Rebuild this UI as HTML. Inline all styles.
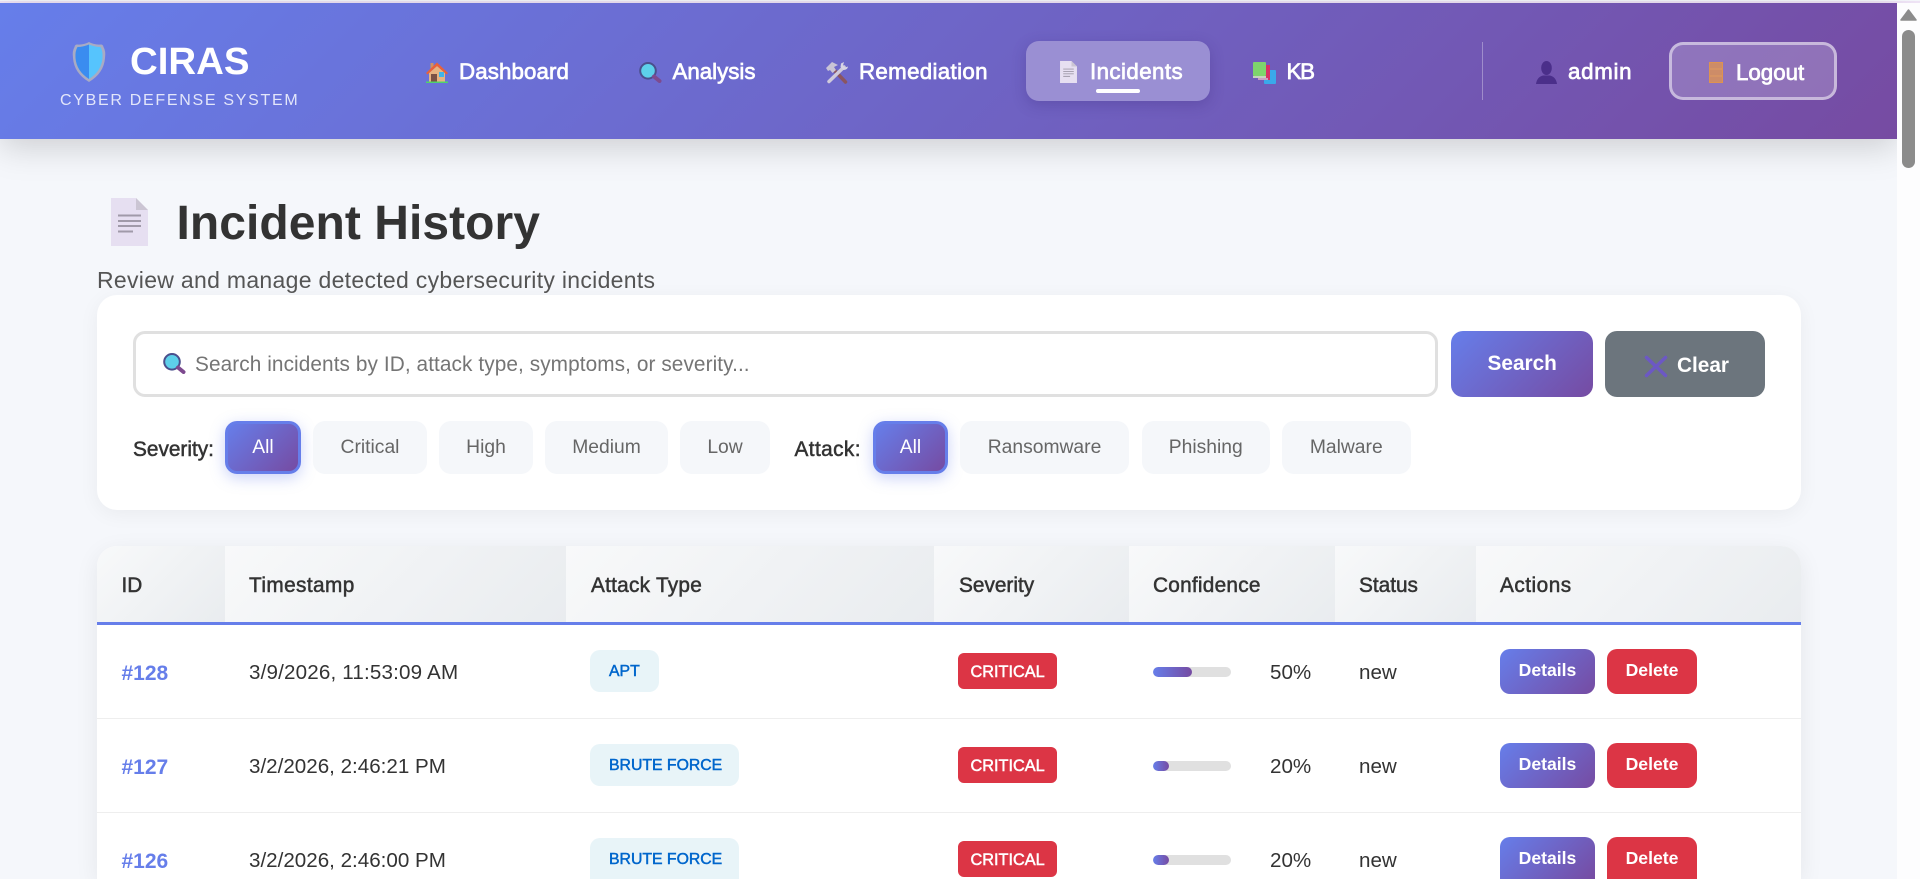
<!DOCTYPE html>
<html lang="en">
<head>
<meta charset="utf-8">
<title>CIRAS - Incident History</title>
<style>
*{box-sizing:border-box;margin:0;padding:0}
html,body{width:1920px;height:879px;overflow:hidden;background:#f5f7fb;font-family:"Liberation Sans",Arial,sans-serif}
#page{position:relative;width:1920px;height:879px;overflow:hidden;background:#f5f7fb}
.a{position:absolute}
.t{position:absolute;white-space:nowrap;line-height:1}
.s{-webkit-text-stroke:.5px currentColor}
.grad{background:linear-gradient(135deg,#667eea,#764ba2)}
svg{position:absolute;display:block;overflow:visible}
#hdr{left:0;top:3px;width:1897px;height:136px;box-shadow:0 8px 32px rgba(0,0,0,.17)}
.nav{font-size:22.3px;color:#fff;top:61px;-webkit-text-stroke:.7px #fff}
.pill{position:absolute;top:421px;height:53px;border-radius:12px;background:#f5f7fa;color:#666;font-size:19.3px;display:flex;align-items:center;justify-content:center}
.pill.on{background:linear-gradient(135deg,#667eea,#764ba2);border:3px solid #667eea;color:#fff;box-shadow:0 4px 15px rgba(102,126,234,.35)}
.th{position:absolute;top:0;height:76px;background:linear-gradient(135deg,#f8f9fa,#e9ecef)}
.hd{font-size:20.8px;color:#333;top:575.7px}
.cell{font-size:20.6px;color:#333}
.id{font-size:21px;font-weight:700;color:#667eea}
.badge{position:absolute;height:42px;background:#e8f4f8;border-radius:10px}
.bt{font-size:15.8px;color:#0066cc}
.crit{position:absolute;left:958px;width:99px;height:36px;background:#dc3545;border-radius:6px}
.ct{font-size:16.3px;color:#fff;left:970.5px}
.bar{position:absolute;left:1153px;width:78px;height:10px;background:#e0e0e0;border-radius:5px;overflow:hidden}
.bar i{display:block;height:100%;border-radius:5px;background:linear-gradient(90deg,#667eea,#764ba2)}
.btn{position:absolute;height:45px;border-radius:10px;color:#fff;font-size:17.6px;font-weight:700;display:flex;align-items:center;justify-content:center;padding-bottom:2px}
.det{left:1500px;width:95px;background:linear-gradient(135deg,#667eea,#764ba2)}
.del{left:1607px;width:90px;background:#dc3545}
.rule{position:absolute;left:97px;width:1704px;height:1px;background:#eee}
</style>
</head>
<body>
<div id="page">
<svg width="0" height="0" style="position:absolute">
<defs>
<symbol id="mag" viewBox="0 0 23 21"><circle cx="9" cy="8.8" r="7.8" fill="#5dd0ea" stroke="#4a4f8c" stroke-width="2"/><path d="M15 14.5L20.5 19" stroke="#7d4a8f" stroke-width="4" stroke-linecap="round"/></symbol>
<symbol id="doc" viewBox="0 0 37 48"><path d="M0 0H25L37 12V48H0Z" fill="#e6dff1"/><path d="M25 0L37 12H25Z" fill="#cbc5d3"/><path d="M7 17.5H30M7 23H30M7 28H30M7 33.5H22" stroke="#a09aa9" stroke-width="2"/></symbol>
</defs>
</svg>

<div class="a" style="left:0;top:1px;width:1920px;height:2px;background:#efe4f6"></div>
<div class="a grad" id="hdr"></div>

<!-- logo -->
<svg style="left:71.5px;top:41px" width="34" height="42" viewBox="0 0 34 42"><path d="M17 1Q22 4 29 3.5Q31 3.5 31.5 6Q34 10 33 17Q32 32 17 41Q2 32 1 17Q0 10 2.5 6Q3 3.5 5 3.5Q12 4 17 1Z" fill="#a8abc4"/><path d="M17 3.5Q11 6 5.5 6Q3 10 3.5 17Q4.5 30 17 38Z" fill="#3a8cf0"/><path d="M17 3.5Q23 6 28.5 6Q31 10 30.5 17Q29.5 30 17 38Z" fill="#56c4fd"/></svg>
<div class="t" style="left:130px;top:42.5px;font-size:38.4px;font-weight:700;color:#fff">CIRAS</div>
<div class="t" style="left:60px;top:93px;font-size:16px;letter-spacing:1.7px;color:#e3e6fa">CYBER DEFENSE SYSTEM</div>

<!-- nav -->
<svg style="left:426px;top:62px" width="22" height="21" viewBox="0 0 22 21"><rect x="4.5" y="1" width="3" height="6" fill="#cf9264"/><path d="M3 11L11 4L19 11V19.5H3Z" fill="#e6b381"/><path d="M11 .5L22 11L20.5 12.5L11 4L1.5 12.5L0 11Z" fill="#e8613a"/><rect x="5" y="12" width="6" height="7.5" fill="#7b5245"/><rect x="13" y="10" width="5" height="5" fill="#3fb4ea"/><rect x="0" y="19.5" width="22" height="1.5" fill="#4fd36b"/></svg>
<div class="t nav" style="left:459px;letter-spacing:.1px">Dashboard</div>
<svg style="left:639px;top:62px" width="23" height="21"><use href="#mag"/></svg>
<div class="t nav" style="left:672.5px">Analysis</div>
<svg style="left:825px;top:62px" width="23" height="22" viewBox="0 0 23 22"><path d="M9 8L20.5 20" stroke="#8a5560" stroke-width="3.5" stroke-linecap="round"/><path d="M4 19.5L19 5" stroke="#cfcadb" stroke-width="3.5" stroke-linecap="round"/><path d="M1 6L7 0L13 3L9 5L11 8L7.5 11L5 8L3 9Z" fill="#c9c4d6"/><path d="M16 1.5L19 0L18 3.5L20 5.5L23 4.5Q22.5 8 18.5 8L15.5 5Z" fill="#d9d4e4"/></svg>
<div class="t nav" style="left:859px;letter-spacing:.33px">Remediation</div>

<div class="a" style="left:1026px;top:41px;width:183.5px;height:60px;border-radius:13px;background:#9a8fd3;box-shadow:0 4px 14px rgba(50,30,110,.25)"></div>
<svg style="left:1060px;top:61px" width="17" height="22"><use href="#doc"/></svg>
<div class="t nav" style="left:1090px;letter-spacing:.42px">Incidents</div>
<div class="a" style="left:1095.5px;top:89px;width:44.5px;height:4px;border-radius:2px;background:#fff"></div>

<svg style="left:1253px;top:62px" width="23" height="22" viewBox="0 0 23 22"><rect x="11" y="8" width="12" height="14" rx="1" fill="#3aa9ea"/><rect x="5" y="3" width="12" height="15" fill="#d92f66"/><rect x="5" y="16" width="10" height="2" fill="#c9a0c0"/><rect x="0" y="0" width="13" height="14" rx="1" fill="#7ed56c"/><rect x="0" y="14" width="13" height="2" fill="#c6d2c0"/></svg>
<div class="t nav" style="left:1286.5px;letter-spacing:-1.2px">KB</div>

<div class="a" style="left:1482px;top:42px;width:1px;height:58px;background:rgba(255,255,255,.32)"></div>
<svg style="left:1536px;top:61px" width="21" height="23" viewBox="0 0 21 23"><ellipse cx="10.5" cy="7" rx="5.3" ry="7" fill="#4b2f8a"/><path d="M0 23Q1 16 7 14.5H14Q20 16 21 23Z" fill="#4b2f8a"/></svg>
<div class="t nav" style="left:1568px;letter-spacing:.7px">admin</div>

<div class="a" style="left:1669px;top:42px;width:168px;height:58px;border:3px solid rgba(255,255,255,.5);border-radius:14px;background:rgba(255,255,255,.2)"></div>
<svg style="left:1709px;top:62px" width="14" height="21" viewBox="0 0 14 21"><rect x=".5" y=".5" width="13" height="20" fill="#cd8c68" stroke="#de9350"/><path d="M1 7H13M1 14H13" stroke="#de9a60" stroke-width="1"/></svg>
<div class="t nav" style="left:1736px;top:62px">Logout</div>

<!-- title -->
<svg style="left:111px;top:198px" width="37" height="48"><use href="#doc"/></svg>
<div class="t" style="left:176.5px;top:199.8px;font-size:48px;font-weight:700;letter-spacing:.05px;color:#333">Incident History</div>
<div class="t" style="left:97px;top:268.5px;font-size:23px;letter-spacing:.3px;color:#555">Review and manage detected cybersecurity incidents</div>

<!-- search card -->
<div class="a" style="left:97px;top:295px;width:1704px;height:215px;background:#fff;border-radius:20px;box-shadow:0 4px 20px rgba(0,0,0,.05)"></div>
<div class="a" style="left:133px;top:331px;width:1305px;height:66px;border:3px solid #e0e0e0;border-radius:12px;background:#fff"></div>
<svg style="left:163px;top:353px" width="23" height="21"><use href="#mag"/></svg>
<div class="t" style="left:195px;top:354.6px;font-size:20.8px;letter-spacing:.08px;color:#757575">Search incidents by ID, attack type, symptoms, or severity...</div>
<div class="a grad" style="left:1451px;top:331px;width:142px;height:66px;border-radius:12px"></div>
<div class="t" style="left:1487.5px;top:354px;font-size:20.8px;font-weight:700;color:#fff">Search</div>
<div class="a" style="left:1605px;top:331px;width:160px;height:66px;border-radius:12px;background:#6c757d"></div>
<svg style="left:1644px;top:356px" width="24" height="21" viewBox="0 0 24 21"><path d="M2.5 1.5L21.5 19.5M21.5 1.5L2.5 19.5" stroke="#6c58c4" stroke-width="3.5" stroke-linecap="round"/></svg>
<div class="t" style="left:1677px;top:356px;font-size:20.8px;font-weight:700;color:#fff">Clear</div>

<div class="t s" style="left:133px;top:439.6px;font-size:20.8px;color:#333">Severity:</div>
<div class="pill on" style="left:225px;width:76px">All</div>
<div class="pill" style="left:313px;width:114px">Critical</div>
<div class="pill" style="left:439px;width:94px">High</div>
<div class="pill" style="left:545px;width:123px">Medium</div>
<div class="pill" style="left:680px;width:90px">Low</div>
<div class="t s" style="left:794.5px;top:439.6px;font-size:20.8px;letter-spacing:.4px;color:#333">Attack:</div>
<div class="pill on" style="left:873px;width:75px">All</div>
<div class="pill" style="left:960px;width:169px">Ransomware</div>
<div class="pill" style="left:1141.5px;width:128.5px">Phishing</div>
<div class="pill" style="left:1282px;width:128.5px">Malware</div>

<!-- table -->
<div class="a" style="left:97px;top:546px;width:1704px;height:333px;background:#fff;border-radius:20px 20px 0 0;overflow:hidden;box-shadow:0 6px 24px rgba(0,0,0,.07)">
  <div class="th" style="left:0;width:128px"></div>
  <div class="th" style="left:128px;width:341px"></div>
  <div class="th" style="left:469px;width:368px"></div>
  <div class="th" style="left:837px;width:195px"></div>
  <div class="th" style="left:1032px;width:206px"></div>
  <div class="th" style="left:1238px;width:141px"></div>
  <div class="th" style="left:1379px;width:325px"></div>
  <div class="a" style="left:0;top:76px;width:1704px;height:3px;background:#667eea"></div>
</div>
<div class="t hd s" style="left:121.5px">ID</div>
<div class="t hd s" style="left:249px;letter-spacing:.4px">Timestamp</div>
<div class="t hd s" style="left:591px;letter-spacing:.25px">Attack Type</div>
<div class="t hd s" style="left:959px">Severity</div>
<div class="t hd s" style="left:1153px;letter-spacing:.25px">Confidence</div>
<div class="t hd s" style="left:1359px">Status</div>
<div class="t hd s" style="left:1500px;letter-spacing:.5px">Actions</div>

<div class="rule" style="top:718px"></div>
<div class="rule" style="top:812px"></div>

<!-- row 1 -->
<div class="t id" style="left:121.5px;top:663px">#128</div>
<div class="t cell" style="left:249px;top:663.2px;letter-spacing:.17px">3/9/2026, 11:53:09 AM</div>
<div class="badge" style="left:590px;top:650px;width:69px"></div>
<div class="t bt s" style="left:609px;top:664.3px">APT</div>
<div class="crit" style="top:653px"></div>
<div class="t ct s" style="top:663.9px">CRITICAL</div>
<div class="bar" style="top:667px"><i style="width:50%"></i></div>
<div class="t cell" style="left:1270px;top:663.2px">50%</div>
<div class="t cell" style="left:1359px;top:663.4px">new</div>
<div class="btn det" style="top:649px">Details</div>
<div class="btn del" style="top:649px">Delete</div>

<!-- row 2 -->
<div class="t id" style="left:121.5px;top:757px">#127</div>
<div class="t cell" style="left:249px;top:757.2px">3/2/2026, 2:46:21 PM</div>
<div class="badge" style="left:590px;top:744px;width:149px"></div>
<div class="t bt s" style="left:609px;top:758.3px">BRUTE FORCE</div>
<div class="crit" style="top:747px"></div>
<div class="t ct s" style="top:757.9px">CRITICAL</div>
<div class="bar" style="top:761px"><i style="width:20%"></i></div>
<div class="t cell" style="left:1270px;top:757.2px">20%</div>
<div class="t cell" style="left:1359px;top:757.4px">new</div>
<div class="btn det" style="top:743px">Details</div>
<div class="btn del" style="top:743px">Delete</div>

<!-- row 3 -->
<div class="t id" style="left:121.5px;top:851px">#126</div>
<div class="t cell" style="left:249px;top:851.2px">3/2/2026, 2:46:00 PM</div>
<div class="a" style="left:590px;top:838px;width:149px;height:41px;background:#e8f4f8;border-radius:10px 10px 0 0"></div>
<div class="t bt s" style="left:609px;top:852.3px">BRUTE FORCE</div>
<div class="crit" style="top:841px"></div>
<div class="t ct s" style="top:851.9px">CRITICAL</div>
<div class="bar" style="top:855px"><i style="width:20%"></i></div>
<div class="t cell" style="left:1270px;top:851.2px">20%</div>
<div class="t cell" style="left:1359px;top:851.4px">new</div>
<div class="btn det" style="top:837px;height:42px;padding-bottom:0;border-radius:10px 10px 0 0">Details</div>
<div class="btn del" style="top:837px;height:42px;padding-bottom:0;border-radius:10px 10px 0 0">Delete</div>

<!-- scrollbar -->
<div class="a" style="left:1897px;top:3px;width:23px;height:876px;background:#fdfdfe"></div>
<svg style="left:1897px;top:0" width="23" height="30" viewBox="0 0 23 30"><path d="M11.5 10L19 20H4Z" fill="#8b8b8b" stroke="#8b8b8b" stroke-width="1.5" stroke-linejoin="round"/></svg>
<div class="a" style="left:1902px;top:30px;width:13px;height:138px;border-radius:7px;background:#8b8b8b"></div>
</div>
</body>
</html>
